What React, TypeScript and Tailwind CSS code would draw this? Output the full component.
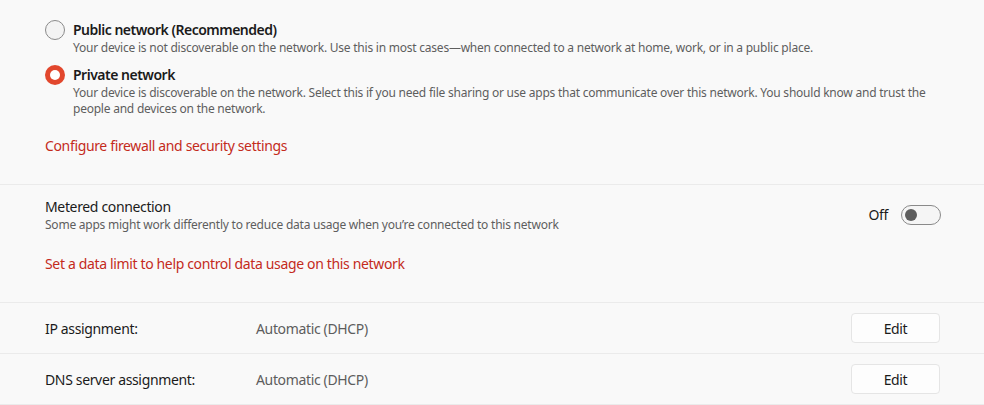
import React from 'react';

const FONT = { fontFamily: '"Segoe UI", "Noto Sans", "Open Sans", sans-serif' };

function Radio({ checked }: { checked?: boolean }) {
  if (checked) {
    return (
      <div className="w-5 h-5 rounded-full bg-[#e2472d] flex items-center justify-center shrink-0">
        <div className="w-[10px] h-[10px] rounded-full bg-white" />
      </div>
    );
  }
  return <div className="w-5 h-5 rounded-full border border-[#8a8a8a] bg-[#f3f3f3] shrink-0" />;
}

function NetworkOption({ title, desc, checked }: { title: string; desc: React.ReactNode; checked?: boolean }) {
  return (
    <div className="flex items-start gap-2">
      <div className="w-[20px] h-[18px] flex items-center shrink-0">
        <Radio checked={checked} />
      </div>
      <div className="flex-1 min-w-0">
        <div className="text-[14px] leading-[18px] font-semibold tracking-[-0.5px] text-[#1b1b1b]">{title}</div>
        <div className="mt-px text-[12px] leading-4 tracking-[-0.23px] text-[#5e5e5e] whitespace-nowrap">{desc}</div>
      </div>
    </div>
  );
}

function Row({ label, value }: { label: string; value: string }) {
  return (
    <div className="h-[51px] border-b border-[#ebebeb] flex items-center pl-[45px] pr-[44px] text-[14px] tracking-[-0.35px]">
      <div className="w-[211px] text-[#1b1b1b]">{label}</div>
      <div className="flex-1 text-[#5d5d5d]">{value}</div>
      <button className="w-[89px] h-[30px] rounded-[4px] border border-[#e5e5e5] bg-[#fdfdfd] text-[#1b1b1b]">
        Edit
      </button>
    </div>
  );
}

export default function App() {
  return (
    <div className="w-[984px] h-[405px] bg-[#f9f9f9] overflow-hidden" style={FONT}>
      <div className="h-[185px] border-b border-[#ebebeb] pl-[45px] pr-[30px] pt-[21px]">
        <NetworkOption
          title="Public network (Recommended)"
          desc="Your device is not discoverable on the network. Use this in most cases—when connected to a network at home, work, or in a public place."
        />
        <div className="mt-[10px]">
          <NetworkOption
            checked
            title="Private network"
            desc={
              <>
                Your device is discoverable on the network. Select this if you need file sharing or use apps that
                communicate over this network. You should know and trust the
                <br />
                people and devices on the network.
              </>
            }
          />
        </div>
        <div className="mt-[19px] text-[14px] leading-5 tracking-[-0.35px] text-[#c42b1c]">
          Configure firewall and security settings
        </div>
      </div>

      <div className="h-[118px] border-b border-[#ebebeb] pl-[45px] pr-[43px] pt-[12px]">
        <div className="flex items-start justify-between">
          <div>
            <div className="text-[14px] leading-5 tracking-[-0.35px] text-[#1b1b1b]">Metered connection</div>
            <div className="text-[12px] leading-4 tracking-[-0.23px] text-[#5e5e5e]">
              Some apps might work differently to reduce data usage when you’re connected to this network
            </div>
          </div>
          <div className="flex items-center gap-[13px] mt-[7px]">
            <span className="text-[14px] tracking-[-0.35px] text-[#1b1b1b]">Off</span>
            <div className="w-[40px] h-[20px] rounded-full border border-[#8a8a8a] bg-[#f5f5f5] flex items-center pl-[3px]">
              <div className="w-[12px] h-[12px] rounded-full bg-[#5d5d5d]" />
            </div>
          </div>
        </div>
        <div className="mt-[21px] text-[14px] leading-5 tracking-[-0.35px] text-[#c42b1c]">
          Set a data limit to help control data usage on this network
        </div>
      </div>

      <Row label="IP assignment:" value="Automatic (DHCP)" />
      <Row label="DNS server assignment:" value="Automatic (DHCP)" />
    </div>
  );
}
